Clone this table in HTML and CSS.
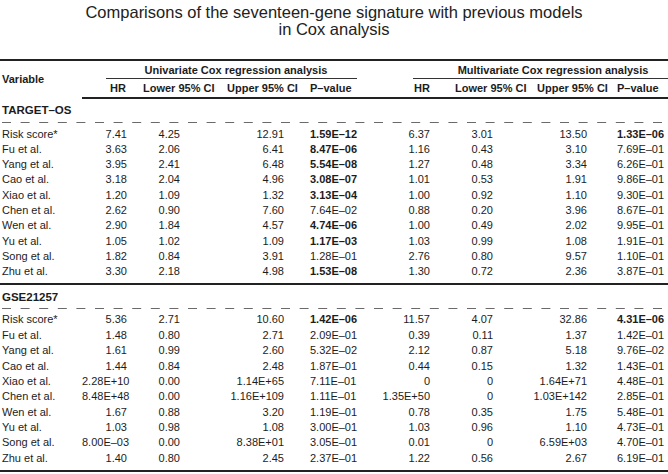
FILE: index.html
```html
<!DOCTYPE html>
<html>
<head>
<meta charset="utf-8">
<link rel="stylesheet" href="styles.css">
</head>
<body>
<div class="page">
  <h1 class="title"><span>Comparisons of the seventeen-gene signature with previous models</span><span>in Cox analysis</span></h1>
  <table class="cox">
    <colgroup>
      <col class="w0"><col class="w1"><col class="w2"><col class="w3"><col class="w4"><col class="w5"><col class="w6"><col class="w7"><col class="w8">
    </colgroup>
    <thead>
      <tr class="grp-row">
        <th rowspan="2" class="var-head">Variable</th>
        <th colspan="4" class="grp"><div class="grp-label uni">Univariate Cox regression analysis</div></th>
        <th colspan="4" class="grp"><div class="grp-label multi">Multivariate Cox regression analysis</div></th>
      </tr>
      <tr class="col-row">
        <th class="h1">HR</th><th class="h2">Lower 95% CI</th><th class="h3">Upper 95% CI</th><th class="h4">P–value</th>
        <th class="h5">HR</th><th class="h6">Lower 95% CI</th><th class="h7">Upper 95% CI</th><th class="h8">P–value</th>
      </tr>
    </thead>
    <tbody class="section first">
      <tr class="sec-head"><th colspan="9">TARGET–OS</th></tr>
      <tr class="dash-row"><td colspan="9"><svg class="dashes" width="666" height="1" viewBox="0 0 666 1"><line x1="0" y1="0.5" x2="666" y2="0.5" stroke="#6a6a6a" stroke-width="1" stroke-dasharray="9 9.6"/></svg></td></tr>
      <tr class="row"><td>Risk score*</td><td>7.41</td><td>4.25</td><td>12.91</td><td class="b">1.59E–12</td><td>6.37</td><td>3.01</td><td>13.50</td><td class="b">1.33E–06</td></tr>
      <tr class="row"><td>Fu et al.</td><td>3.63</td><td>2.06</td><td>6.41</td><td class="b">8.47E–06</td><td>1.16</td><td>0.43</td><td>3.10</td><td>7.69E–01</td></tr>
      <tr class="row"><td>Yang et al.</td><td>3.95</td><td>2.41</td><td>6.48</td><td class="b">5.54E–08</td><td>1.27</td><td>0.48</td><td>3.34</td><td>6.26E–01</td></tr>
      <tr class="row"><td>Cao et al.</td><td>3.18</td><td>2.04</td><td>4.96</td><td class="b">3.08E–07</td><td>1.01</td><td>0.53</td><td>1.91</td><td>9.86E–01</td></tr>
      <tr class="row"><td>Xiao et al.</td><td>1.20</td><td>1.09</td><td>1.32</td><td class="b">3.13E–04</td><td>1.00</td><td>0.92</td><td>1.10</td><td>9.30E–01</td></tr>
      <tr class="row"><td>Chen et al.</td><td>2.62</td><td>0.90</td><td>7.60</td><td>7.64E–02</td><td>0.88</td><td>0.20</td><td>3.96</td><td>8.67E–01</td></tr>
      <tr class="row"><td>Wen et al.</td><td>2.90</td><td>1.84</td><td>4.57</td><td class="b">4.74E–06</td><td>1.00</td><td>0.49</td><td>2.02</td><td>9.95E–01</td></tr>
      <tr class="row"><td>Yu et al.</td><td>1.05</td><td>1.02</td><td>1.09</td><td class="b">1.17E–03</td><td>1.03</td><td>0.99</td><td>1.08</td><td>1.91E–01</td></tr>
      <tr class="row"><td>Song et al.</td><td>1.82</td><td>0.84</td><td>3.91</td><td>1.28E–01</td><td>2.76</td><td>0.80</td><td>9.57</td><td>1.10E–01</td></tr>
      <tr class="row last"><td>Zhu et al.</td><td>3.30</td><td>2.18</td><td>4.98</td><td class="b">1.53E–08</td><td>1.30</td><td>0.72</td><td>2.36</td><td>3.87E–01</td></tr>
    </tbody>
    <tbody class="section second">
      <tr class="sec-head"><th colspan="9">GSE21257</th></tr>
      <tr class="dash-row"><td colspan="9"><svg class="dashes" width="666" height="1" viewBox="0 0 666 1"><line x1="0" y1="0.5" x2="666" y2="0.5" stroke="#6a6a6a" stroke-width="1" stroke-dasharray="9 9.6"/></svg></td></tr>
      <tr class="row"><td>Risk score*</td><td>5.36</td><td>2.71</td><td>10.60</td><td class="b">1.42E–06</td><td>11.57</td><td>4.07</td><td>32.86</td><td class="b">4.31E–06</td></tr>
      <tr class="row"><td>Fu et al.</td><td>1.48</td><td>0.80</td><td>2.71</td><td>2.09E–01</td><td>0.39</td><td>0.11</td><td>1.37</td><td>1.42E–01</td></tr>
      <tr class="row"><td>Yang et al.</td><td>1.61</td><td>0.99</td><td>2.60</td><td>5.32E–02</td><td>2.12</td><td>0.87</td><td>5.18</td><td>9.76E–02</td></tr>
      <tr class="row"><td>Cao et al.</td><td>1.44</td><td>0.84</td><td>2.48</td><td>1.87E–01</td><td>0.44</td><td>0.15</td><td>1.32</td><td>1.43E–01</td></tr>
      <tr class="row"><td>Xiao et al.</td><td>2.28E+10</td><td>0.00</td><td>1.14E+65</td><td>7.11E–01</td><td>0</td><td>0</td><td>1.64E+71</td><td>4.48E–01</td></tr>
      <tr class="row"><td>Chen et al.</td><td>8.48E+48</td><td>0.00</td><td>1.16E+109</td><td>1.11E–01</td><td>1.35E+50</td><td>0</td><td>1.03E+142</td><td>2.85E–01</td></tr>
      <tr class="row"><td>Wen et al.</td><td>1.67</td><td>0.88</td><td>3.20</td><td>1.19E–01</td><td>0.78</td><td>0.35</td><td>1.75</td><td>5.48E–01</td></tr>
      <tr class="row"><td>Yu et al.</td><td>1.03</td><td>0.98</td><td>1.08</td><td>3.00E–01</td><td>1.03</td><td>0.96</td><td>1.10</td><td>4.73E–01</td></tr>
      <tr class="row"><td>Song et al.</td><td>8.00E–03</td><td>0.00</td><td>8.38E+01</td><td>3.05E–01</td><td>0.01</td><td>0</td><td>6.59E+03</td><td>4.70E–01</td></tr>
      <tr class="row last"><td>Zhu et al.</td><td>1.40</td><td>0.80</td><td>2.45</td><td>2.37E–01</td><td>1.22</td><td>0.56</td><td>2.67</td><td>6.19E–01</td></tr>
    </tbody>
  </table>
</div>
</body>
</html>
```

FILE: styles.css
```css
html, body {
  margin: 0;
  padding: 0;
  background: #ffffff;
}

body {
  font-family: "Liberation Sans", Arial, Helvetica, sans-serif;
  color: #1c1c1c;
}

.page {
  width: 668px;
}

.title {
  margin: 4px 0 21px 0;
  font-size: 16.5px;
  line-height: 17px;
  font-weight: normal;
  text-align: center;
  color: #222;
}

.title span {
  display: block;
}

.cox {
  width: 668px;
  border-collapse: collapse;
  table-layout: fixed;
  font-size: 11px;
  border-top: 2px solid #222;
  border-bottom: 2px solid #222;
}

.w0 { width: 82px; }
.w1 { width: 53px; }
.w2 { width: 87px; }
.w3 { width: 82px; }
.w4 { width: 58px; }
.w5 { width: 78px; }
.w6 { width: 90px; }
.w7 { width: 80px; }
.w8 { width: 58px; }

.cox th, .cox td {
  padding: 0;
  white-space: nowrap;
}

.cox th {
  font-weight: bold;
}

/* header */
.var-head {
  text-align: left;
  padding-left: 2px !important;
  vertical-align: middle;
  line-height: 13px;
}

.grp {
  padding-top: 3px !important;
  vertical-align: bottom;
}

.grp-label {
  text-align: center;
  line-height: 13px;
  padding-bottom: 1px;
  border-bottom: 1px solid #333;
}

.grp-label.uni {
  margin-left: 24px;
  margin-right: 5px;
  padding-left: 9px;
}

.grp-label.multi {
  margin-left: 51px;
  margin-right: 0;
  padding-left: 25px;
}

.col-row th {
  line-height: 13px;
  padding-top: 3px;
  padding-bottom: 2px;
  text-align: left;
  border-bottom: 2px solid #222;
}

.col-row .h1 { text-align: right; padding-right: 9px; }
.col-row .h2 { padding-left: 8px; }
.col-row .h3 { padding-left: 5px; }
.col-row .h4 { padding-left: 6px; }
.col-row .h5 { text-align: right; padding-right: 10px; }
.col-row .h6 { padding-left: 15px; }
.col-row .h7 { padding-left: 7px; }
.col-row .h8 { padding-left: 7px; }

/* sections */
.section.second {
  border-top: 2px solid #222;
}

.sec-head th {
  text-align: left;
  padding-left: 2px;
  height: 22px;
  line-height: 22px;
  font-size: 11.5px;
}

.second .sec-head th {
  height: 20px;
  line-height: 20px;
  padding-top: 2px;
}

.dash-row td {
  height: 4.5px;
  line-height: 0;
  vertical-align: top;
  padding: 1px 0 0 2px;
}

.dashes {
  display: block;
}

.row td {
  line-height: 15.3px;
  height: 15.3px;
}

.second .row td {
  line-height: 15.35px;
  height: 15.35px;
}

.first .row.last td {
  padding-bottom: 3.5px;
}

.second .row.last td {
  padding-bottom: 4px;
}

.row td:nth-child(1) { text-align: left; padding-left: 2px; }
.row td:nth-child(2) { text-align: right; padding-right: 8px; }
.row td:nth-child(3) { text-align: right; padding-right: 42px; }
.row td:nth-child(4) { text-align: right; padding-right: 20px; }
.row td:nth-child(5) { text-align: left; padding-left: 6px; }
.row td:nth-child(6) { text-align: right; padding-right: 10px; }
.row td:nth-child(7) { text-align: right; padding-right: 37px; }
.row td:nth-child(8) { text-align: right; padding-right: 23px; }
.row td:nth-child(9) { text-align: left; padding-left: 7px; }

.row td.b {
  font-weight: bold;
}
```
